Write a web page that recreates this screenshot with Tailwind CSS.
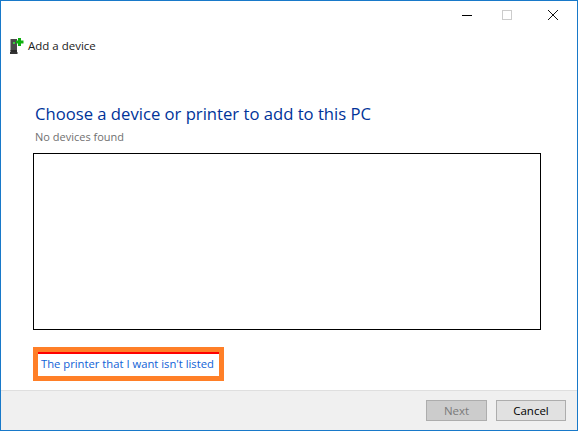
<!DOCTYPE html>
<html>
<head>
<meta charset="utf-8">
<script src="https://cdn.jsdelivr.net/npm/@tailwindcss/browser@4"></script>
</head>
<body class="bg-white">
<div class="flex h-[431px] w-[578px] flex-col border border-[#1879c9] bg-white font-['Open_Sans','Noto_Sans',sans-serif]">
  <div class="flex h-[30px] shrink-0 items-center justify-end">
    <svg class="mr-[8px]" width="108" height="30" viewBox="0 0 108 30" fill="none">
      <path d="M1 14.5h10" stroke="#000" stroke-width="1"/>
      <rect x="41.5" y="9.5" width="9" height="9" stroke="#ccc"/>
      <path d="M87 9l10 10M97 9l-10 10" stroke="#111" stroke-width="1"/>
    </svg>
  </div>
  <div class="flex h-[30px] shrink-0 items-center pl-[9px]">
    <svg width="15" height="17" viewBox="0 0 15 17" class="mr-[3px]">
      <rect x="0.5" y="1" width="6.5" height="12" fill="#4a4a4a"/>
      <rect x="0.5" y="12" width="6.5" height="2" fill="#2a2a2a"/>
      <rect x="0" y="14" width="7.5" height="2" fill="#333"/>
      <rect x="3" y="4" width="2" height="2" fill="#3ecb3e"/>
      <path d="M8 0h3v2.5h2.5v3H11V8H8V5.5H6v-3h2z" fill="#0fb00f"/>
    </svg>
    <span class="text-[11.5px] text-[#1a1a1a]">Add a device</span>
  </div>
  <div class="flex min-h-0 flex-1 flex-col pl-[32px]">
    <h1 class="mt-[41px] pl-[2px] text-[16.65px] leading-[24px] font-normal text-[#003399]">Choose a device or printer to add to this PC</h1>
    <p class="mt-[3px] pl-[2px] text-[11px] leading-[16px] text-[#707070]">No devices found</p>
    <div class="mt-[8px] h-[177px] w-[508px] shrink-0 border border-black bg-white"></div>
    <div class="mt-[17px] flex h-[34px] w-[191px] items-center border-[5px] border-[#ff7f27] bg-white">
      <div class="flex h-full w-full items-center border-t-2 border-[#ff0000] pl-[3px]">
        <a class="-mt-[1px] text-[11.24px] whitespace-nowrap text-[#0f62d6]">The printer that I want isn't listed</a>
      </div>
    </div>
  </div>
  <div class="flex h-[40px] shrink-0 items-center justify-end gap-[9px] border-t border-[#dfdfdf] bg-[#f0f0f0] pr-[11px]">
    <button class="h-[21px] w-[61px] border border-[#adadad] bg-[#cccccc] text-[11.5px] text-[#7a7a7a]">Next</button>
    <button class="h-[21px] w-[70px] border border-[#adadad] bg-[#e1e1e1] text-[11.5px] text-black">Cancel</button>
  </div>
</div>
</body>
</html>
